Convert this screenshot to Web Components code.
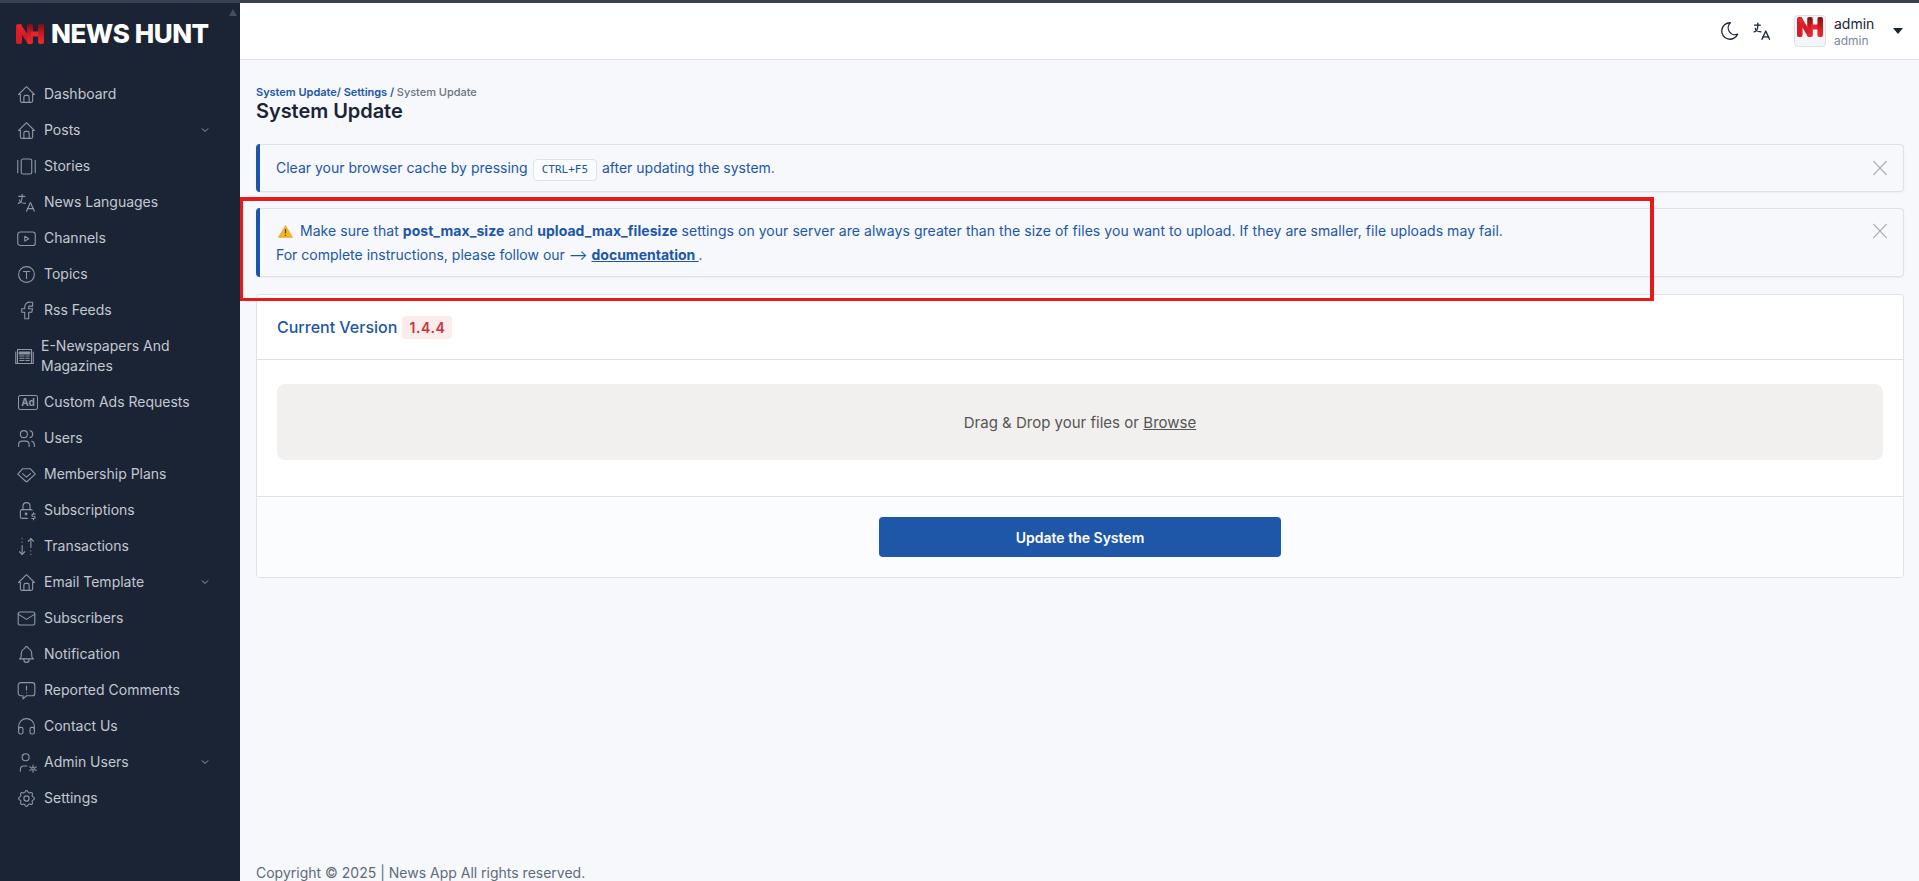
<!DOCTYPE html>
<html lang="en">
<head>
<meta charset="utf-8">
<title>System Update</title>
<style>
  html, body { margin: 0; height: 100%; overflow: hidden; }
  body { font-family: "Inter", "Liberation Sans", sans-serif; font-size: 14px; background: #f6f8fc; }
</style>
</head>
<body>
<app-shell>
  <side-bar slot="side">
    <nav-item icon="home">Dashboard</nav-item>
    <nav-item icon="home" more>Posts</nav-item>
    <nav-item icon="stories">Stories</nav-item>
    <nav-item icon="language">News Languages</nav-item>
    <nav-item icon="channel">Channels</nav-item>
    <nav-item icon="topic">Topics</nav-item>
    <nav-item icon="facebook">Rss Feeds</nav-item>
    <nav-item icon="news" tall>E-Newspapers And Magazines</nav-item>
    <nav-item icon="ad">Custom Ads Requests</nav-item>
    <nav-item icon="users">Users</nav-item>
    <nav-item icon="diamond">Membership Plans</nav-item>
    <nav-item icon="lock">Subscriptions</nav-item>
    <nav-item icon="transfer">Transactions</nav-item>
    <nav-item icon="home" more>Email Template</nav-item>
    <nav-item icon="mail">Subscribers</nav-item>
    <nav-item icon="bell">Notification</nav-item>
    <nav-item icon="report">Reported Comments</nav-item>
    <nav-item icon="headphones">Contact Us</nav-item>
    <nav-item icon="usercog" more>Admin Users</nav-item>
    <nav-item icon="settings">Settings</nav-item>
  </side-bar>
  <top-bar slot="top"></top-bar>
  <page-heading title-text="System Update"></page-heading>
  <notice-alert>
    Clear your browser cache by pressing <kbd-key>CTRL+F5</kbd-key> after updating the system.
  </notice-alert>
  <notice-alert tall>
    <div style="height:24px;white-space:nowrap;letter-spacing:.05px"><warn-icon></warn-icon> Make sure that <b>post_max_size</b> and <b>upload_max_filesize</b> settings on your server are always greater than the size of files you want to upload. If they are smaller, file uploads may fail.</div>
    <div style="height:24px;white-space:nowrap">For complete instructions, please follow our ⟶ <a href="#" style="color:inherit;font-weight:700">documentation </a>.</div>
  </notice-alert>
  <update-card version="1.4.4"></update-card>
  <page-footer slot="foot">Copyright © 2025 | News App All rights reserved.</page-footer>
</app-shell>

<script>
function nhMark(id) {
  return `
  <defs>
    <linearGradient id="${id}a" x1="0" y1="0" x2="1" y2="1">
      <stop offset="0" stop-color="#f0282f"/><stop offset="1" stop-color="#b8141c"/>
    </linearGradient>
    <linearGradient id="${id}b" x1="0" y1="0" x2="0" y2="1">
      <stop offset="0" stop-color="#7d1015"/><stop offset=".6" stop-color="#d81e26"/><stop offset="1" stop-color="#ee2a31"/>
    </linearGradient>
  </defs>
  <rect x="0" y="0" width="6" height="20" rx="2" fill="#d91c25"/>
  <path d="M.6 2.500 L4.600 0 L16 17 L12 20 Z" fill="url(#${id}a)"/>
  <rect x="11" y="0" width="6" height="20" rx="2" fill="url(#${id}b)"/>
  <rect x="15" y="7.500" width="8" height="5" fill="#e8242c"/>
  <rect x="22" y="0" width="6" height="20" rx="2" fill="url(#${id}b)"/>`;
}

const ICONS = {
  home: `<path d="M5 12H3l9-9 9 9h-2"/><path d="M5 12v7a2 2 0 0 0 2 2h10a2 2 0 0 0 2-2v-7"/><path d="M9 21v-6a2 2 0 0 1 2-2h2a2 2 0 0 1 2 2v6"/>`,
  stories: `<rect x="6" y="3.500" width="12" height="17" rx="2"/><path d="M2 5v14"/><path d="M22 5v14"/>`,
  language: `<path d="M3 5h7"/><path d="M7 2.500V5c0 4.400-1.800 7.500-4.500 8"/><path d="M4 9c0 2.100 2.900 3.900 6.700 4"/><path d="M12 22l4.500-10 4.500 10"/><path d="M20 19h-7"/>`,
  channel: `<rect x="2" y="4.500" width="20" height="15.500" rx="3"/><path d="M10 9.500l4.500 2.750-4.500 2.750z"/>`,
  topic: `<circle cx="12" cy="12" r="9"/><path d="M8.500 8.500h7"/><path d="M12 8.500v8"/>`,
  facebook: `<path d="M6.500 10v4h3.500v7.500h4.500V14h3.500l1-4h-4.500V8a1 1 0 0 1 1-1h3.500V2.500H16a5.500 5.500 0 0 0-6 5.500v2z"/>`,
  news: `<path d="M4 4h16v16H4z"/><path d="M2 7v13h2"/><path d="M22 7v13h-2"/><path d="M6 7h12v2H6z" fill="currentColor"/><path d="M6.500 11.500h5M6.500 14h5M6.500 16.500h5M13.500 11.500h4M13.500 14h4M13.500 16.500h4"/>`,
  users: `<circle cx="9" cy="7" r="4"/><path d="M3 21v-2a4 4 0 0 1 4-4h4a4 4 0 0 1 4 4v2"/><path d="M16 3.100a4 4 0 0 1 0 7.800"/><path d="M21 21v-2a4 4 0 0 0-3-3.900"/>`,
  diamond: `<path d="M2 11.500l5.500-6h9l5.500 6-9.300 8.500a1 1 0 0 1-1.400 0z"/><path d="M7.500 11l4.500 4 4.500-4"/>`,
  lock: `<path d="M13 21H7a2 2 0 0 1-2-2v-6a2 2 0 0 1 2-2h10a2 2 0 0 1 1.500.7"/><circle cx="11.500" cy="16" r="1"/><path d="M8 11V7a4 4 0 1 1 8 0v4"/><path d="M22 16h-2.500a1.300 1.300 0 0 0 0 2.600h1a1.300 1.300 0 0 1 0 2.600H18"/><path d="M20 21.200V22.500M20 14.500v1.500"/>`,
  transfer: `<path d="M7 3v.01M7 7v.01M7 11v10"/><path d="M4 18l3 3 3-3"/><path d="M17 21v-.01M17 17v-.01M17 13V3"/><path d="M14 6l3-3 3 3"/>`,
  mail: `<rect x="2.500" y="4.500" width="19" height="15" rx="2"/><path d="M2.500 7l9.500 6 9.500-6"/>`,
  bell: `<path d="M10 5a2 2 0 1 1 4 0 7 7 0 0 1 4 6v3a4 4 0 0 0 2 3H4a4 4 0 0 0 2-3v-3a7 7 0 0 1 4-6"/><path d="M9 17v1a3 3 0 0 0 6 0v-1"/>`,
  report: `<path d="M18.500 3a3 3 0 0 1 3 3v9a3 3 0 0 1-3 3H12l-4 3.500V18H5.500a3 3 0 0 1-3-3V6a3 3 0 0 1 3-3z"/><path d="M12 7v4.500"/><path d="M12 14.500v.01"/>`,
  headphones: `<path d="M3 15a2 2 0 0 1 2-2h1a2 2 0 0 1 2 2v3.500a2 2 0 0 1-2 2H5a2 2 0 0 1-2-2z"/><path d="M16 15a2 2 0 0 1 2-2h1a2 2 0 0 1 2 2v3.500a2 2 0 0 1-2 2h-1a2 2 0 0 1-2-2z"/><path d="M3 15v-3a9 9 0 0 1 18 0v3"/>`,
  usercog: `<circle cx="11" cy="6" r="4"/><path d="M5 22v-2a4 4 0 0 1 4-4h3.500"/><circle cx="19.500" cy="19" r="1.500"/><path d="M19.500 15v1.500M19.500 21.500V23M15.800 17l1.400.8M21.800 20.200l1.400.8M15.800 21l1.400-.8M21.800 17.800l1.400-.8"/>`,
  settings: `<path d="M10.325 4.317c.426-1.756 2.924-1.756 3.350 0a1.724 1.724 0 0 0 2.573 1.066c1.543-.94 3.310.826 2.370 2.370a1.724 1.724 0 0 0 1.065 2.572c1.756.426 1.756 2.924 0 3.350a1.724 1.724 0 0 0-1.066 2.573c.94 1.543-.826 3.310-2.370 2.370a1.724 1.724 0 0 0-2.572 1.065c-.426 1.756-2.924 1.756-3.350 0a1.724 1.724 0 0 0-2.573-1.066c-1.543.94-3.310-.826-2.370-2.370a1.724 1.724 0 0 0-1.065-2.572c-1.756-.426-1.756-2.924 0-3.350a1.724 1.724 0 0 0 1.066-2.573c-.94-1.543.826-3.310 2.370-2.370 1 .608 2.296.07 2.572-1.065z"/><circle cx="12" cy="12" r="3"/>`,
  moon: `<path d="M12 3h.393a7.500 7.500 0 0 0 7.920 12.446A9 9 0 1 1 12 3z"/>`,
  close: `<path d="M4.500 4l15 16"/><path d="M19.500 4l-15 16"/>`,
};

function iconSvg(name, size = 21, stroke = 1.1) {
  if (name === "ad") {
    return `<svg style="margin-left:4px;flex:none" width="20" height="15" viewBox="0 0 20 15" fill="none" stroke="currentColor" stroke-width="1">
      <rect x=".5" y=".5" width="19" height="14" rx="1.500"/>
      <text x="10" y="11.200" text-anchor="middle" fill="currentColor" stroke="none" font-size="10" font-weight="700" font-family="Inter, sans-serif">Ad</text>
    </svg>`;
  }
  return `<svg style="flex:none" width="${size}" height="${size}" viewBox="0 0 24 24" fill="none" stroke="currentColor" stroke-width="${stroke * 24 / size}" stroke-linecap="round" stroke-linejoin="round">${ICONS[name]}</svg>`;
}

customElements.define(
  "app-shell",
  class extends HTMLElement {
    constructor() {
      super();
      const template = document.createElement("template");
      template.innerHTML = `
        <style>
          :host { display: block; position: relative; height: 881px; overflow: hidden; border-top: 3px solid #3a404f; box-sizing: border-box; background: #f6f8fc; }
          .layout { display: grid; grid-template-columns: 240px 1fr; height: 100%; }
          .right { display: flex; flex-direction: column; min-width: 0; height: 878px; }
          main { display: flex; flex-direction: column; flex: 1; padding: 0 15px 0 16px; min-height: 0; }
          /* review marker drawn over the screenshot */
          .marker { position: absolute; left: 240px; top: 194px; width: 1414px; height: 104px; box-sizing: border-box; border: 4px solid #e8191c; border-left-width: 3px; border-bottom-width: 3px; pointer-events: none; }
        </style>
        <div class="layout">
          <slot name="side"></slot>
          <div class="right">
            <slot name="top"></slot>
            <main><slot></slot><slot name="foot"></slot></main>
          </div>
        </div>
        <div class="marker"></div>
      `;
      this.attachShadow({ mode: "open" }).appendChild(template.content.cloneNode(true));
    }
  }
);

customElements.define(
  "side-bar",
  class extends HTMLElement {
    constructor() {
      super();
      const template = document.createElement("template");
      template.innerHTML = `
        <style>
          :host { display: flex; flex-direction: column; position: relative; background: #1b2435; height: 878px; }
          .brand { display: flex; align-items: center; gap: 7px; height: 56px; padding: 5px 0 0 16px; box-sizing: border-box; margin-bottom: 17px; }
          .brand span { color: #fff; font: 800 26px/1 "Inter", sans-serif; white-space: nowrap; letter-spacing: -.45px; }
          nav { display: flex; flex-direction: column; }
          .thumb { position: absolute; right: 3px; top: 6px; width: 0; height: 0; border: 4.500px solid transparent; border-top: 0; border-bottom: 7px solid #454d5d; }
        </style>
        <div class="brand">
          <svg width="28" height="20" viewBox="0 0 28 20">${nhMark("side")}</svg>
          <span>NEWS HUNT</span>
        </div>
        <nav><slot></slot></nav>
        <div class="thumb"></div>
      `;
      this.attachShadow({ mode: "open" }).appendChild(template.content.cloneNode(true));
    }
  }
);

customElements.define(
  "nav-item",
  class extends HTMLElement {
    connectedCallback() {
      if (this.shadowRoot) return;
      const name = this.getAttribute("icon");
      const chevron = this.hasAttribute("more")
        ? `<svg class="chev" width="8" height="6" viewBox="0 0 8 6" fill="none" stroke="currentColor" stroke-width="1"><path d="M1 1.500l3 3 3-3"/></svg>`
        : "";
      this.attachShadow({ mode: "open" }).innerHTML = `
        <style>
          :host { display: flex; align-items: center; min-height: 36px; padding-left: 16px; color: #c3c8d1; font-size: 14px; line-height: 20px; box-sizing: border-box; }
          :host([tall]) { height: 56px; padding-left: 16px; }
          :host([tall]) .ic { width: 16px; margin-right: 9px; }
          .ic { width: 20px; margin-right: 8px; display: flex; justify-content: center; color: #8f97a5; flex: none; }
          .label { flex: 1; min-width: 0; padding-right: 16px; }
          .chev { color: #9aa1ae; margin-right: 31px; flex: none; }
        </style>
        <span class="ic">${iconSvg(name)}</span>
        <span class="label"><slot></slot></span>
        ${chevron}
      `;
    }
  }
);

customElements.define(
  "top-bar",
  class extends HTMLElement {
    constructor() {
      super();
      const template = document.createElement("template");
      template.innerHTML = `
        <style>
          :host { display: flex; align-items: center; height: 57px; box-sizing: border-box; background: #fff; border-bottom: 1px solid #dde1e8; padding-right: 16px; color: #1b2435; flex: none; }
          .tools { margin-left: auto; display: flex; align-items: center; gap: 11px; }
          .avatar { width: 32px; height: 32px; box-sizing: border-box; border: 1px solid #dde1e8; border-radius: 4px; background: #f4f5f7; display: flex; justify-content: center; padding-top: 1px; margin-left: 22px; }
          .who { display: flex; flex-direction: column; margin-left: 8px; width: 59px; padding-top: 2px; }
          .name { font-size: 14px; line-height: 17px; color: #1b2435; }
          .role { font-size: 12px; line-height: 17px; color: #7c8698; }
          .caret { width: 0; height: 0; border: 5.500px solid transparent; border-top: 6px solid #1b2435; border-bottom: 0; }
          .group { display: flex; align-items: center; }
        </style>
        <div class="tools">
          ${iconSvg("moon", 22, 1.3)}
          ${iconSvg("language", 20, 1.3)}
        </div>
        <div class="group">
          <div class="avatar"><svg width="26" height="20" viewBox="0 0 28 20" preserveAspectRatio="none">${nhMark("top")}</svg></div>
          <div class="who"><span class="name">admin</span><span class="role">admin</span></div>
          <div class="caret"></div>
        </div>
      `;
      this.attachShadow({ mode: "open" }).appendChild(template.content.cloneNode(true));
    }
  }
);

customElements.define(
  "page-heading",
  class extends HTMLElement {
    connectedCallback() {
      if (this.shadowRoot) return;
      this.attachShadow({ mode: "open" }).innerHTML = `
        <style>
          :host { display: block; padding-top: 25px; margin-bottom: 21px; flex: none; }
          .crumbs { font-size: 11px; line-height: 14px; font-weight: 600; color: #1c56a8; letter-spacing: -.02px; }
          .crumbs span { color: #6b7280; font-weight: 500; }
          h1 { margin: 0; font-size: 20px; line-height: 24px; font-weight: 600; color: #1b2435; letter-spacing: -.05px; }
        </style>
        <div class="crumbs">System Update/ Settings / <span>System Update</span></div>
        <h1>${this.getAttribute("title-text")}</h1>
      `;
    }
  }
);

customElements.define(
  "kbd-key",
  class extends HTMLElement {
    constructor() {
      super();
      this.attachShadow({ mode: "open" }).innerHTML = `
        <style>
          :host { display: inline-block; box-sizing: border-box; height: 22px; padding: 0 8px; margin: 0 1px; border: 1px solid #dde1e8; border-radius: 4px; background: #fbfcfe; font: 11px/20px "DejaVu Sans Mono", monospace; color: #1c56a8; }
        </style>
        <slot></slot>
      `;
    }
  }
);

customElements.define(
  "warn-icon",
  class extends HTMLElement {
    constructor() {
      super();
      this.attachShadow({ mode: "open" }).innerHTML = `
        <style>:host { display: inline-block; vertical-align: -2px; margin: 0 3px 0 2px; }</style>
        <svg width="15" height="13" viewBox="0 0 15 13"><path d="M7.500 .6 L14.600 12.400 H.4 Z" fill="#f0b429" stroke="#e8a31a" stroke-width=".6" stroke-linejoin="round"/><path d="M7.500 4v4.500M7.500 9.800v1.200" stroke="#5b4310" stroke-width="1.200"/></svg>
      `;
    }
  }
);

customElements.define(
  "notice-alert",
  class extends HTMLElement {
    connectedCallback() {
      if (this.shadowRoot) return;
      this.attachShadow({ mode: "open" }).innerHTML = `
        <style>
          :host { display: flex; align-items: center; justify-content: space-between; box-sizing: border-box; min-height: 48px; margin-bottom: 16px; padding: 0 13px 0 20px; background: #f6f8fc; border: 1px solid #dde1e8; border-left: 0; border-radius: 4px; position: relative; color: #1c56a8; font-size: 14px; line-height: 24px; box-shadow: 0 1px 2px rgba(30,40,60,.05); flex: none; }
          :host::before { content: ""; position: absolute; left: 0; top: -1px; bottom: -1px; width: 4px; background: #1c56a8; border-radius: 4px 0 0 4px; }
          :host([tall]) { height: 69px; margin-bottom: 17px; align-items: flex-start; padding-top: 10px; }
          .close { color: #a7adb8; display: flex; flex: none; }
          :host([tall]) .close { margin-top: 2px; }
        </style>
        <div><slot></slot></div>
        <span class="close">${iconSvg("close", 20, 1.3)}</span>
      `;
    }
  }
);

customElements.define(
  "update-card",
  class extends HTMLElement {
    connectedCallback() {
      if (this.shadowRoot) return;
      this.attachShadow({ mode: "open" }).innerHTML = `
        <style>
          :host { display: block; background: #fff; border: 1px solid #dde1e8; border-radius: 4px; flex: none; overflow: hidden; }
          .head { display: flex; align-items: center; gap: 5px; height: 65px; padding: 0 20px; border-bottom: 1px solid #dde1e8; box-sizing: border-box; color: #1c56a8; font-size: 16px; font-weight: 500; }
          .badge { display: inline-block; background: #faeceb; color: #c9333f; font-size: 14px; font-weight: 600; letter-spacing: .6px; line-height: 23px; padding: 0 7px; border-radius: 4px; }
          .body { padding: 24px 20px 36px; }
          .drop { height: 76px; border-radius: 8px; background: #f1f0ee; color: #555; display: flex; align-items: center; justify-content: center; font-size: 15px; }
          .drop u { margin-left: .3em; }
          .foot { display: flex; justify-content: center; padding: 20px 0; height: 81px; box-sizing: border-box; background: #fbfcfe; border-top: 1px solid #dde1e8; }
          button { width: 402px; height: 40px; border: 0; border-radius: 4px; background: #1e56a8; color: #fff; font: 600 14px "Inter", sans-serif; }
        </style>
        <div class="head">Current Version <span class="badge">${this.getAttribute("version")}</span></div>
        <div class="body"><div class="drop">Drag &amp; Drop your files or <u>Browse</u></div></div>
        <div class="foot"><button type="button">Update the System</button></div>
      `;
    }
  }
);

customElements.define(
  "page-footer",
  class extends HTMLElement {
    constructor() {
      super();
      this.attachShadow({ mode: "open" }).innerHTML = `
        <style>
          :host { display: block; margin-top: auto; height: 16px; line-height: 16px; font-size: 14px; color: #5f6b7a; }
        </style>
        <slot></slot>
      `;
    }
  }
);
</script>
</body>
</html>
